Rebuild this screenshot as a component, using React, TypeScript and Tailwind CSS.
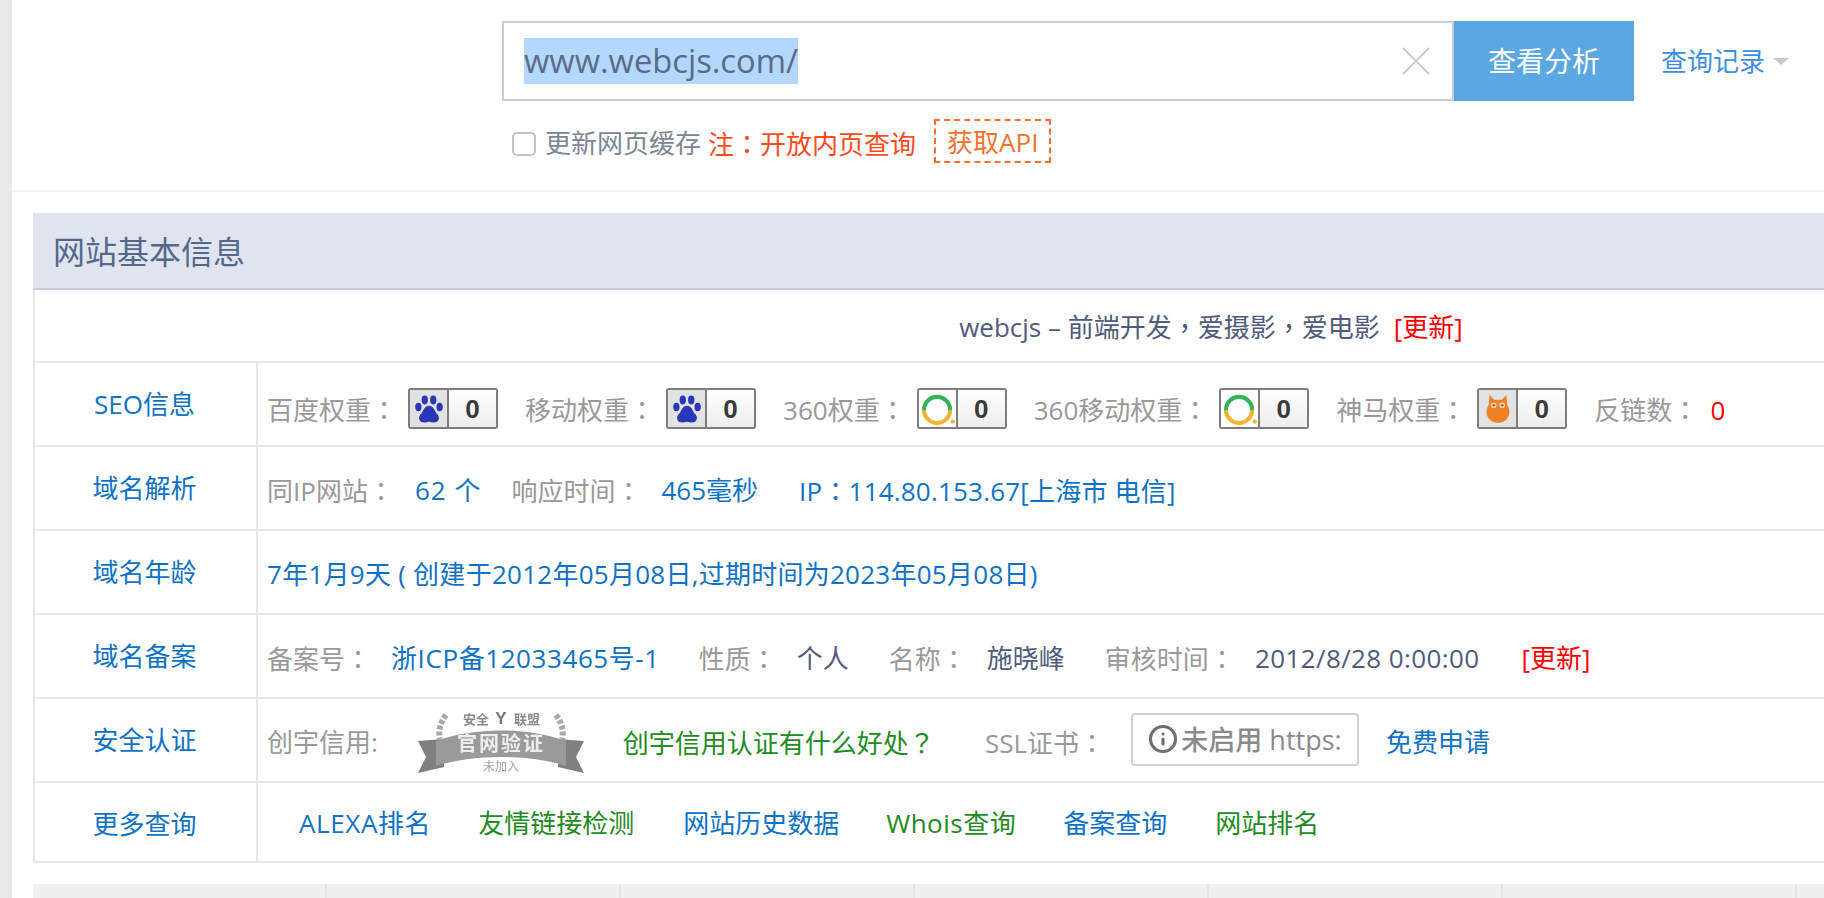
import React from 'react';
import { Info, X } from 'lucide-react';

const FONT = 'font-["Open_Sans","Noto_Sans_CJK_SC",sans-serif]';

// full-width punctuation sits centred in the cell, as in the TC face
function P({ children }: { children: string }) {
  return <span className="font-['Noto_Sans_CJK_TC',sans-serif]">{children}</span>;
}

function Paw() {
  return (
    <svg viewBox="0 0 32 32" className="h-[34px] w-[34px]">
      <ellipse cx="6" cy="14" rx="3" ry="4" fill="#2a38b8" />
      <ellipse cx="12" cy="7.5" rx="3" ry="4.2" fill="#2a38b8" />
      <ellipse cx="20" cy="7.5" rx="3" ry="4.2" fill="#2a38b8" />
      <ellipse cx="26" cy="14" rx="3" ry="4" fill="#2a38b8" />
      <path d="M16 13c-4 0-5 4-7 7-2 2-3 4-2 6 1 3 5 3 9 2 4 1 8 1 9-2 1-2 0-4-2-6-2-3-3-7-7-7z" fill="#2a38b8" />
    </svg>
  );
}

function Ring() {
  return (
    <svg viewBox="0 0 40 40" className="h-[36px] w-[38px]">
      <path d="M5 21A14.5 14.5 0 1 1 34 21" fill="none" stroke="#2fb457" strokeWidth="4.5" />
      <path d="M5 21A14.5 14.5 0 0 0 34 21" fill="none" stroke="#f4b32e" strokeWidth="4.5" />
      <circle cx="37" cy="34" r="2.4" fill="#f4b32e" />
    </svg>
  );
}

function Owl() {
  return (
    <svg viewBox="0 0 30 34" className="h-[32px] w-[28px]">
      <path d="M6 2l5 5h8l5-5 1 11c3 4 3 10 0 14-2 3-6 5-10 5s-8-2-10-5c-3-4-3-10 0-14z" fill="#ee8026" />
      <circle cx="10.5" cy="13" r="3" fill="#fbd9b8" />
      <circle cx="19.5" cy="13" r="3" fill="#fbd9b8" />
      <circle cx="10.5" cy="13" r="1.3" fill="#a9521c" />
      <circle cx="19.5" cy="13" r="1.3" fill="#a9521c" />
    </svg>
  );
}

function Badge({ kind }: { kind: 'paw' | 'ring' | 'owl' }) {
  return (
    <span className="flex h-[41px] w-[90px] shrink-0 overflow-hidden rounded-[3px] border-2 border-[#7d7d7d]">
      <span className={`flex w-[39px] shrink-0 items-center justify-center border-r-2 border-[#7d7d7d] ${kind === 'ring' ? 'bg-white' : 'bg-[#e2e2e2]'}`}>
        {kind === 'paw' && <Paw />}
        {kind === 'ring' && <Ring />}
        {kind === 'owl' && <Owl />}
      </span>
      <span className="flex flex-1 items-center justify-center bg-gradient-to-b from-white to-[#ededed] font-['Liberation_Sans',sans-serif] text-[26px] font-bold text-[#3a3a3a]">0</span>
    </span>
  );
}

function Seal() {
  return (
    <svg viewBox="0 0 166 66" className="h-[66px] w-[166px] shrink-0 blur-[0.6px]">
      <path d="M28 6c-6 8-8 16-6 24M138 6c6 8 8 16 6 24" fill="none" stroke="#a8a8a8" strokeWidth="6" strokeDasharray="4 2" />
      <path d="M0 32l26-2v28l-26 6 8-16z" fill="#7f7f7f" />
      <path d="M166 32l-26-2v28l26 6-8-16z" fill="#7f7f7f" />
      <path d="M18 32c38-14 92-14 130 0v25c-38-12-92-12-130 0z" fill="#9a9a9a" />
      <g fontFamily="Noto Sans CJK SC" textAnchor="middle">
        <text x="58" y="15" fontSize="13" fontWeight="700" fill="#8a8a8a">安全</text>
        <text x="83" y="15.4" fontSize="17" fontWeight="700" fill="#777" fontFamily="Liberation Sans">Y</text>
        <text x="109" y="15" fontSize="13" fontWeight="700" fill="#8a8a8a">联盟</text>
        <text x="83" y="42" fontSize="20" fontWeight="700" letterSpacing="2" fill="#ececec">官网验证</text>
        <text x="83" y="62" fontSize="12" fill="#a0a0a0">未加入</text>
      </g>
    </svg>
  );
}

function Row({ label, h = 'h-[84px]', labelClass = '', bodyClass = 'pt-[4px]', children }: { label: string; h?: string; labelClass?: string; bodyClass?: string; children: React.ReactNode }) {
  return (
    <div className={`flex border-b-2 border-[#e8e8e8] ${h}`}>
      <div className={`flex w-[223px] shrink-0 items-center justify-center border-r-2 border-[#e8e8e8] pr-[2px] text-[#0e72c5] ${labelClass}`}>{label}</div>
      <div className={`flex flex-1 items-center pl-[9px] whitespace-nowrap text-[#999] ${bodyClass}`}>{children}</div>
    </div>
  );
}

export default function App() {
  return (
    <div className={`flex h-[898px] w-[1824px] overflow-hidden bg-white text-[26px] leading-none ${FONT}`}>
      <div className="w-[12px] shrink-0 bg-[#e8e8e8]" />
      <div className="flex-1">
        <header className="h-[192px] border-b-2 border-[#f3f3f3] pl-[490px] pt-[21px]">
          <div className="flex items-center">
            <div className="flex h-[80px] w-[952px] items-center justify-between border-2 border-[#c3cfe0] pl-[20px] pr-[11px] text-[32.7px] text-[#5b6b87]">
              <span className="bg-[#b3d7ff] py-[3px] leading-[40px]">www.webcjs.com/</span>
              <X size={50} strokeWidth={1} className="text-[#cdcdcd]" />
            </div>
            <button className="flex h-[80px] w-[180px] items-center justify-center bg-[#5aa7e2] text-[28px] text-white">查看分析</button>
            <div className="ml-[27px] flex items-center text-[#3d8fe0]">
              查询记录
              <span className="ml-[8px] h-0 w-0 border-x-[8px] border-t-[7px] border-x-transparent border-t-[#c8c8c8]" />
            </div>
          </div>
          <div className="mt-[18px] flex items-center pl-[10px]">
            <span className="mt-[5px] h-[24px] w-[24px] rounded-[5px] border-2 border-[#c4c4c4]" />
            <span className="ml-[9px] mt-[4px] text-[#7b8794]">更新网页缓存</span>
            <span className="ml-[7px] mt-[4px] text-[#ff4a1c]">注<P>：</P>开放内页查询</span>
            <span className="ml-[18px] border-2 border-dashed border-[#f5722e] px-[11px] pb-[6px] pt-[8px] text-[#f5722e]">获取API</span>
          </div>
        </header>
        <main className="ml-[21px] w-[2354px] pt-[21px]">
          <div className="flex h-[77px] items-center border-b-2 border-[#c5cfe0] bg-[#e0e4ef] pl-[20px] pt-[2px] text-[32px] text-[#54688a]">网站基本信息</div>
          <div className="border-l-2 border-[#e8e8e8]">
            <div className="flex h-[73px] items-center justify-center border-b-2 border-[#e8e8e8] pt-[3px] text-[#4f5b7c]">
              webcjs – 前端开发<P>，</P>爱摄影<P>，</P>爱电影<span className="ml-[14px] text-[#f00]">[更新]</span>
            </div>
            <Row label="SEO信息" bodyClass="pt-[11px]">
              <span>百度权重<P>：</P></span>
              <span className="-mt-[2px] ml-[11px]"><Badge kind="paw" /></span>
              <span className="ml-[27px]">移动权重<P>：</P></span>
              <span className="-mt-[2px] ml-[11px]"><Badge kind="paw" /></span>
              <span className="ml-[27px]">360权重<P>：</P></span>
              <span className="-mt-[2px] ml-[11px]"><Badge kind="ring" /></span>
              <span className="ml-[27px]">360移动权重<P>：</P></span>
              <span className="-mt-[2px] ml-[11px]"><Badge kind="ring" /></span>
              <span className="ml-[27px]">神马权重<P>：</P></span>
              <span className="-mt-[2px] ml-[11px]"><Badge kind="owl" /></span>
              <span className="ml-[27px]">反链数<P>：</P></span>
              <span className="ml-[12px] text-[#f00]">0</span>
            </Row>
            <Row label="域名解析">
              <span>同IP网站<P>：</P></span>
              <span className="ml-[21px] tracking-[1px] text-[#0e72c5]">62 个</span>
              <span className="ml-[30px]">响应时间<P>：</P></span>
              <span className="ml-[20px] text-[#0e72c5]">465毫秒</span>
              <span className="ml-[41px] tracking-[0.2px] text-[#0e72c5]">IP<P>：</P>114.80.153.67[上海市 电信]</span>
            </Row>
            <Row label="域名年龄">
              <span className="tracking-[0.26px] text-[#0e72c5]">7年1月9天 ( 创建于2012年05月08日,过期时间为2023年05月08日)</span>
            </Row>
            <Row label="域名备案">
              <span>备案号<P>：</P></span>
              <span className="ml-[20px] tracking-[0.58px] text-[#0e72c5]">浙ICP备12033465号-1</span>
              <span className="ml-[39px]">性质<P>：</P></span>
              <span className="ml-[20px] text-[#4f5b7c]">个人</span>
              <span className="ml-[40px]">名称<P>：</P></span>
              <span className="ml-[20px] text-[#4f5b7c]">施晓峰</span>
              <span className="ml-[40px]">审核时间<P>：</P></span>
              <span className="ml-[20px] tracking-[0.4px] text-[#4f5b7c]">2012/8/28 0:00:00</span>
              <span className="ml-[42px] text-[#f00]">[更新]</span>
            </Row>
            <Row label="安全认证">
              <span>创宇信用:</span>
              <span className="ml-[40px]"><Seal /></span>
              <span className="ml-[39px] text-[#228b22]">创宇信用认证有什么好处<P>？</P></span>
              <span className="ml-[50px]">SSL证书<P>：</P></span>
              <span className="-mt-[6px] ml-[26px] flex h-[53px] w-[228px] items-center justify-center gap-[3px] rounded-[4px] border-2 border-[#d0d0d0] text-[27px] font-medium text-[#8a8a8a]">
                <Info size={30} strokeWidth={2.5} className="text-[#6f6f6f]" />未启用 https:
              </span>
              <span className="ml-[27px] text-[#0e72c5]">免费申请</span>
            </Row>
            <Row label="更多查询" h="h-[80px]" labelClass="pt-[4px]" bodyClass="pt-[2px]">
              <span className="ml-[32px] tracking-[0.6px] text-[#0e72c5]">ALEXA排名</span>
              <span className="ml-[47px] text-[#228b22]">友情链接检测</span>
              <span className="ml-[49px] text-[#0e72c5]">网站历史数据</span>
              <span className="ml-[47px] tracking-[0.5px] text-[#228b22]">Whois查询</span>
              <span className="ml-[47px] text-[#0e72c5]">备案查询</span>
              <span className="ml-[48px] text-[#228b22]">网站排名</span>
            </Row>
          </div>
          <div className="mt-[21px] grid h-[40px] grid-cols-[294px_294px_294px_294px_294px_294px_294px] bg-[#f0f0f0]">
            {[0, 1, 2, 3, 4, 5, 6].map(i => (
              <div key={i} className="border-r-2 border-[#e6e6e6]" />
            ))}
          </div>
        </main>
      </div>
    </div>
  );
}
